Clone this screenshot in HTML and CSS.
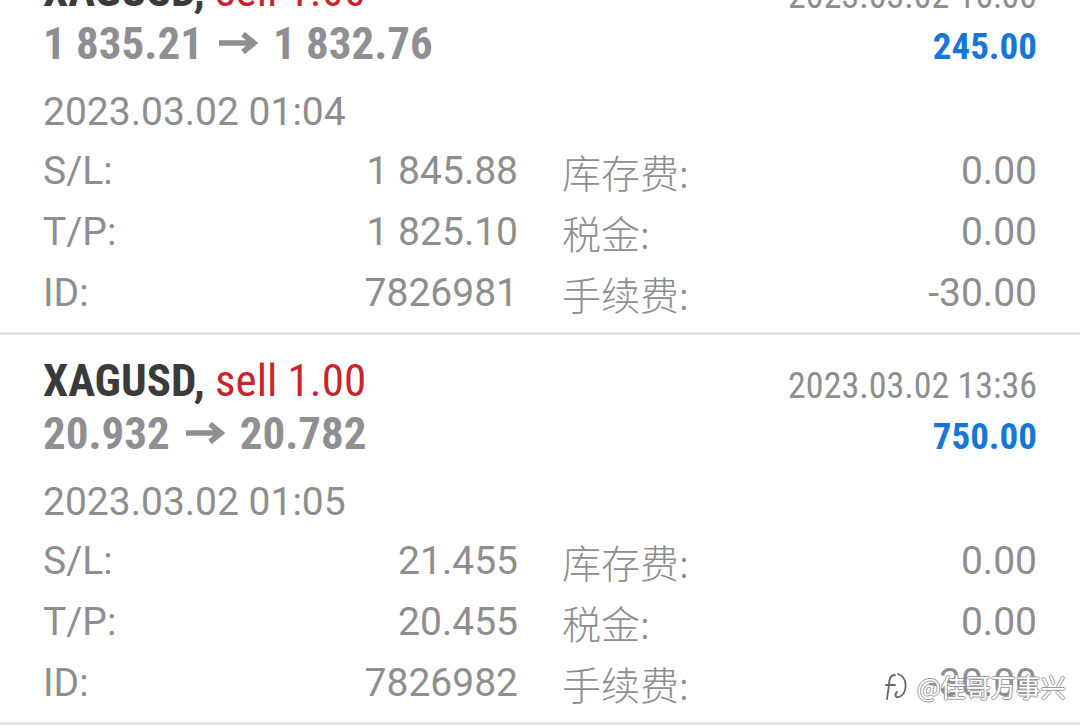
FILE: index.html
```html
<!DOCTYPE html>
<html lang="zh">
<head>
  <meta charset="UTF-8" />
  <meta name="viewport" content="width=device-width, initial-scale=1.0"/>
  <title>历史</title>
  <link rel="stylesheet" href="styles.css">
</head>
<body>

<div class="list">

  <div class="deal">
    <div class="deal-head">
      <div class="symbol"><b>XAGUSD,</b> <span class="sell">sell 1.00</span></div>
      <div class="close-time">2023.03.02 16:00</div>
    </div>
    <div class="deal-price">
      <div class="prices">1 835.21<svg class="arrow" width="40" height="22" viewBox="0 0 40 22"><path d="M1 11 H35 M25 2 L36 11 L25 20" fill="none" stroke="#8f8f93" stroke-width="5.5"/></svg>1 832.76</div>
      <div class="profit">245.00</div>
    </div>
    <div class="open-time">2023.03.02 01:04</div>
    <div class="details">
      <div class="cell"><span>S/L:</span><span>1 845.88</span></div>
      <div class="cell"><span class="cn">库存费:</span><span>0.00</span></div>
      <div class="cell"><span>T/P:</span><span>1 825.10</span></div>
      <div class="cell"><span class="cn">税金:</span><span>0.00</span></div>
      <div class="cell"><span>ID:</span><span>7826981</span></div>
      <div class="cell"><span class="cn">手续费:</span><span>-30.00</span></div>
    </div>
  </div>

  <div class="deal">
    <div class="deal-head">
      <div class="symbol"><b>XAGUSD,</b> <span class="sell">sell 1.00</span></div>
      <div class="close-time">2023.03.02 13:36</div>
    </div>
    <div class="deal-price">
      <div class="prices">20.932<svg class="arrow" width="40" height="22" viewBox="0 0 40 22"><path d="M1 11 H35 M25 2 L36 11 L25 20" fill="none" stroke="#8f8f93" stroke-width="5.5"/></svg>20.782</div>
      <div class="profit">750.00</div>
    </div>
    <div class="open-time">2023.03.02 01:05</div>
    <div class="details">
      <div class="cell"><span>S/L:</span><span>21.455</span></div>
      <div class="cell"><span class="cn">库存费:</span><span>0.00</span></div>
      <div class="cell"><span>T/P:</span><span>20.455</span></div>
      <div class="cell"><span class="cn">税金:</span><span>0.00</span></div>
      <div class="cell"><span>ID:</span><span>7826982</span></div>
      <div class="cell"><span class="cn">手续费:</span><span>-30.00</span></div>
    </div>
  </div>

</div>

<!-- watermark -->
<div class="watermark">
  <svg width="26" height="30" viewBox="0 0 26 30" fill="none" stroke="#666" stroke-width="1.8" stroke-linecap="round">
    <path d="M11 4 C6 4 5 9 5 14 L3 28"/>
    <path d="M2 14 L11 14"/>
    <path d="M14 3 C24 6 24 22 15 26 C12 27 10 24 13 21"/>
  </svg>
  <span>@佳哥万事兴</span>
</div>

</body>
</html>
```

FILE: styles.css
```css
body {
  margin: 0;
  background: #fff;
  font-family: Roboto, "Noto Sans CJK SC", sans-serif;
  color: #8e8e8e;
  overflow: hidden;
}
.list {
  margin-top: -55px;
}
.deal {
  padding: 21px 43px 8px 43px;
  border-bottom: 3px solid #e3e3e3;
}
.deal-head, .deal-price {
  display: flex;
  justify-content: space-between;
  align-items: baseline;
}
.deal-head {
  height: 50px;
  line-height: 50px;
}
.symbol {
  font-size: 45px;
  font-stretch: 80%;
  color: #3a3a3a;
}
.symbol b {
  font-weight: 700;
}
.sell {
  color: #c8242b;
}
.close-time {
  font-size: 36px;
  font-stretch: 80%;
  color: #8e8e8e;
  position: relative;
  top: 2px;
}
.deal-price {
  height: 56px;
  line-height: 56px;
}
.prices {
  font-weight: 700;
  font-size: 45px;
  font-stretch: 80%;
  color: #8f8f93;
}
.arrow {
  margin: 0 15px;
  vertical-align: 5px;
}
.profit {
  font-weight: 700;
  font-size: 37px;
  font-stretch: 80%;
  color: #1677d8;
}
.open-time {
  margin-top: 20px;
  font-size: 39px;
  line-height: 40px;
}
.details {
  margin-top: 9px;
  display: grid;
  grid-template-columns: 475px 1fr;
  column-gap: 44px;
}
.cell {
  display: flex;
  justify-content: space-between;
  font-size: 39px;
  line-height: 61px;
  height: 61px;
}
.cn {
  font-family: "Noto Sans CJK SC", sans-serif;
  font-weight: 300;
}
.watermark {
  position: absolute;
  left: 884px;
  top: 668px;
  display: flex;
  align-items: center;
  gap: 7px;
  font-family: "Noto Sans CJK SC", sans-serif;
  font-size: 25px;
  color: #fff;
  text-shadow: 1px 0 0 #999, -1px 0 0 #999, 0 1px 0 #999, 0 -1px 0 #999;
}
```
